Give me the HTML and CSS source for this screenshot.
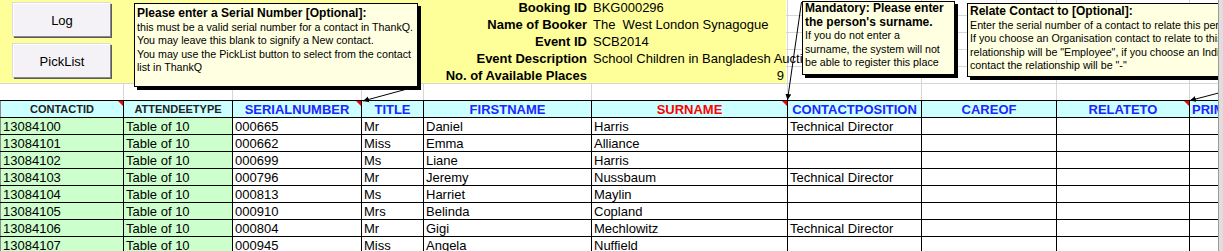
FILE: index.html
```html
<!DOCTYPE html>
<html lang="en">
<head>
    <meta charset="UTF-8">
    <title>Event Booking - Attendees</title>
    <link rel="stylesheet" href="styles.css">
</head>
<body>
    <div class="window">
        <div class="sheet">
            <div class="top">
                <div class="banner">
                    <div class="buttons">
                        <button class="xlButton">Log</button>
                        <button class="xlButton">PickList</button>
                    </div>
                    <div class="booking">
                        <div class="label">Booking ID</div>
                        <div class="value">BKG000296</div>
                        <div class="label">Name of Booker</div>
                        <div class="value">The&nbsp; West London Synagogue</div>
                        <div class="label">Event ID</div>
                        <div class="value">SCB2014</div>
                        <div class="label">Event Description</div>
                        <div class="value">School Children in Bangladesh Auction</div>
                        <div class="label">No. of Available Places</div>
                        <div class="value number">9</div>
                    </div>
                </div>
            </div>

            <table class="attendees">
                <colgroup>
                    <col style="width: 123px">
                    <col style="width: 109px">
                    <col style="width: 129px">
                    <col style="width: 62px">
                    <col style="width: 168px">
                    <col style="width: 196px">
                    <col style="width: 134px">
                    <col style="width: 135px">
                    <col style="width: 133px">
                    <col style="width: 60px">
                </colgroup>
                <thead>
                    <tr>
                        <th class="hdDark noted">CONTACTID</th>
                        <th class="hdDark">ATTENDEETYPE</th>
                        <th class="hdBlue noted">SERIALNUMBER</th>
                        <th class="hdBlue">TITLE</th>
                        <th class="hdBlue">FIRSTNAME</th>
                        <th class="hdRed noted">SURNAME</th>
                        <th class="hdBlue">CONTACTPOSITION</th>
                        <th class="hdBlue">CAREOF</th>
                        <th class="hdBlue noted">RELATETO</th>
                        <th class="hdBlue left">PRIMARY</th>
                    </tr>
                </thead>
                <tbody>
                    <tr>
                        <td class="locked">13084100</td><td class="locked">Table of 10</td><td>000665</td><td>Mr</td><td>Daniel</td><td>Harris</td><td>Technical Director</td><td></td><td></td><td></td>
                    </tr>
                    <tr>
                        <td class="locked">13084101</td><td class="locked">Table of 10</td><td>000662</td><td>Miss</td><td>Emma</td><td>Alliance</td><td></td><td></td><td></td><td></td>
                    </tr>
                    <tr>
                        <td class="locked">13084102</td><td class="locked">Table of 10</td><td>000699</td><td>Ms</td><td>Liane</td><td>Harris</td><td></td><td></td><td></td><td></td>
                    </tr>
                    <tr>
                        <td class="locked">13084103</td><td class="locked">Table of 10</td><td>000796</td><td>Mr</td><td>Jeremy</td><td>Nussbaum</td><td>Technical Director</td><td></td><td></td><td></td>
                    </tr>
                    <tr>
                        <td class="locked">13084104</td><td class="locked">Table of 10</td><td>000813</td><td>Ms</td><td>Harriet</td><td>Maylin</td><td></td><td></td><td></td><td></td>
                    </tr>
                    <tr>
                        <td class="locked">13084105</td><td class="locked">Table of 10</td><td>000910</td><td>Mrs</td><td>Belinda</td><td>Copland</td><td></td><td></td><td></td><td></td>
                    </tr>
                    <tr>
                        <td class="locked">13084106</td><td class="locked">Table of 10</td><td>000804</td><td>Mr</td><td>Gigi</td><td>Mechlowitz</td><td>Technical Director</td><td></td><td></td><td></td>
                    </tr>
                    <tr>
                        <td class="locked">13084107</td><td class="locked">Table of 10</td><td>000945</td><td>Miss</td><td>Angela</td><td>Nuffield</td><td></td><td></td><td></td><td></td>
                    </tr>
                </tbody>
            </table>

            <!-- comment arrows, drawn under the comment boxes -->
            <svg class="arrows" width="1218" height="251" viewBox="0 0 1218 251">
                <defs>
                    <marker id="head" markerUnits="userSpaceOnUse" markerWidth="7" markerHeight="7" refX="6" refY="3.5" orient="auto">
                        <path d="M0 0.5 L6 3.5 L0 6.5 Z" fill="#000"/>
                    </marker>
                </defs>
                <line x1="420" y1="85.5" x2="363" y2="101" stroke="#000" stroke-width="1" marker-end="url(#head)"/>
                <line x1="801.5" y1="2" x2="787.5" y2="100" stroke="#000" stroke-width="1" marker-end="url(#head)"/>
                <line x1="1232" y1="89.5" x2="1190" y2="100.5" stroke="#000" stroke-width="1" marker-end="url(#head)"/>
            </svg>

            <div class="comment serialNote">
                <b>Please enter a Serial Number [Optional]:</b><br>
                this must be a valid serial number for a contact in ThankQ.<br>
                You may leave this blank to signify a New contact.<br>
                You may use the PickList button to select from the contact<br>
                list in ThankQ
            </div>
            <div class="comment surnameNote">
                <b>Mandatory: Please enter<br>
                the person's surname.</b><br>
                If you do not enter a<br>
                surname, the system will not<br>
                be able to register this place
            </div>
            <div class="comment relateNote">
                <b>Relate Contact to [Optional]:</b><br>
                Enter the serial number of a contact to relate this person to.<br>
                If you choose an Organisation contact to relate to this person the<br>
                relationship will be "Employee", if you choose an Individual<br>
                contact the relationship will be "-"
            </div>
        </div>
        <div class="scrollEdge"></div>
    </div>
</body>
</html>
```

FILE: styles.css
```css
* {
    box-sizing: border-box;
}

html, body {
    margin: 0;
    overflow: hidden;
    background-color: #fff;
}

body {
    font-family: "Liberation Sans", Arial, sans-serif;
    font-size: 13px;
    color: #000;
}

.window {
    display: flex;
    width: 1223px;
    height: 251px;
}

.sheet {
    position: relative;
    width: 1218px;
    height: 251px;
    overflow: hidden;
}

.scrollEdge {
    width: 5px;
    border-left: 1px solid #9c9c9c;
    background-color: #dedede;
}

/* top area: booking banner over faint gridlines */
.top {
    height: 100px;
    background:
        linear-gradient(#d6d6d6, #d6d6d6) 123px 0 / 1px 100% no-repeat,
        linear-gradient(#d6d6d6, #d6d6d6) 232px 0 / 1px 100% no-repeat,
        linear-gradient(#d6d6d6, #d6d6d6) 361px 0 / 1px 100% no-repeat,
        linear-gradient(#d6d6d6, #d6d6d6) 423px 0 / 1px 100% no-repeat,
        linear-gradient(#d6d6d6, #d6d6d6) 591px 0 / 1px 100% no-repeat,
        linear-gradient(#d6d6d6, #d6d6d6) 787px 0 / 1px 100% no-repeat,
        linear-gradient(#d6d6d6, #d6d6d6) 921px 0 / 1px 100% no-repeat,
        linear-gradient(#d6d6d6, #d6d6d6) 1056px 0 / 1px 100% no-repeat,
        linear-gradient(#d6d6d6, #d6d6d6) 1189px 0 / 1px 100% no-repeat,
        repeating-linear-gradient(to bottom, transparent 0 15px, #d6d6d6 15px 16px, transparent 16px 17px);
}

.banner {
    display: flex;
    width: 786px;
    height: 83px;
    background-color: #ffff99;
}

.buttons {
    display: flex;
    flex-direction: column;
    gap: 7px;
    width: 423px;
    padding: 3px 0 0 13px;
}

.xlButton {
    width: 98px;
    height: 34px;
    padding: 0;
    font-family: "Liberation Sans", Arial, sans-serif;
    font-size: 13px;
    color: #000;
    background-color: #f4f2f7;
    border: 1px solid;
    border-color: #fff #8a8a8a #8a8a8a #fff;
    box-shadow: 1px 1px 0 #5a5a5a, -1px -1px 0 #dcdcdc;
}

.booking {
    display: grid;
    grid-template-columns: 168px 196px;
    grid-auto-rows: 17px;
    margin-top: -1px;
    line-height: 17px;
    white-space: nowrap;
}

.booking .label {
    text-align: right;
    padding-right: 3px;
    font-weight: bold;
}

.booking .value {
    padding-left: 3px;
}

.booking .number {
    text-align: right;
    padding-right: 2px;
}

/* attendee grid */
.attendees {
    border-collapse: collapse;
    table-layout: fixed;
    width: 1249px;
}

.attendees th, .attendees td {
    height: 17px;
    padding: 0 2px;
    border: 1px solid #000;
    line-height: 15px;
    white-space: nowrap;
    overflow: hidden;
    text-align: left;
}

.attendees tr {
    height: 17px;
}

.attendees th {
    position: relative;
    background-color: #ccffff;
    text-align: center;
    font-weight: bold;
    font-size: 13px;
}

.attendees th.left {
    text-align: left;
}

.attendees td:first-child, .attendees th:first-child {
    border-left-color: #8c8c8c;
}

.hdDark {
    font-size: 11px !important;
    color: #222;
}

.hdBlue {
    color: #2323ff;
}

.hdRed {
    color: #ff0000;
}

.noted::after {
    content: "";
    position: absolute;
    top: 0;
    right: 0;
    border-top: 5px solid #ff0000;
    border-left: 5px solid transparent;
}

.attendees td.locked {
    background-color: #ccffcc;
}

/* comment boxes */
.arrows {
    position: absolute;
    top: 0;
    left: 0;
    pointer-events: none;
}

.comment {
    position: absolute;
    background-color: #ffffe1;
    border: 1px solid #000;
    box-shadow: 3px 3px 0 #000;
    font-family: "Liberation Sans", Arial, sans-serif;
    font-size: 10.7px;
    line-height: 13.6px;
    white-space: nowrap;
    overflow: hidden;
}

.comment b {
    font-size: 12px;
}

.serialNote {
    left: 134px;
    top: 3px;
    width: 284px;
    height: 84px;
    padding: 3px 0 0 2px;
}

.surnameNote {
    left: 802px;
    top: 1px;
    width: 153px;
    height: 74px;
    padding: 0 0 0 2px;
}

.relateNote {
    left: 967px;
    top: 3px;
    width: 300px;
    height: 74px;
    padding: 1px 0 0 2px;
}
```
